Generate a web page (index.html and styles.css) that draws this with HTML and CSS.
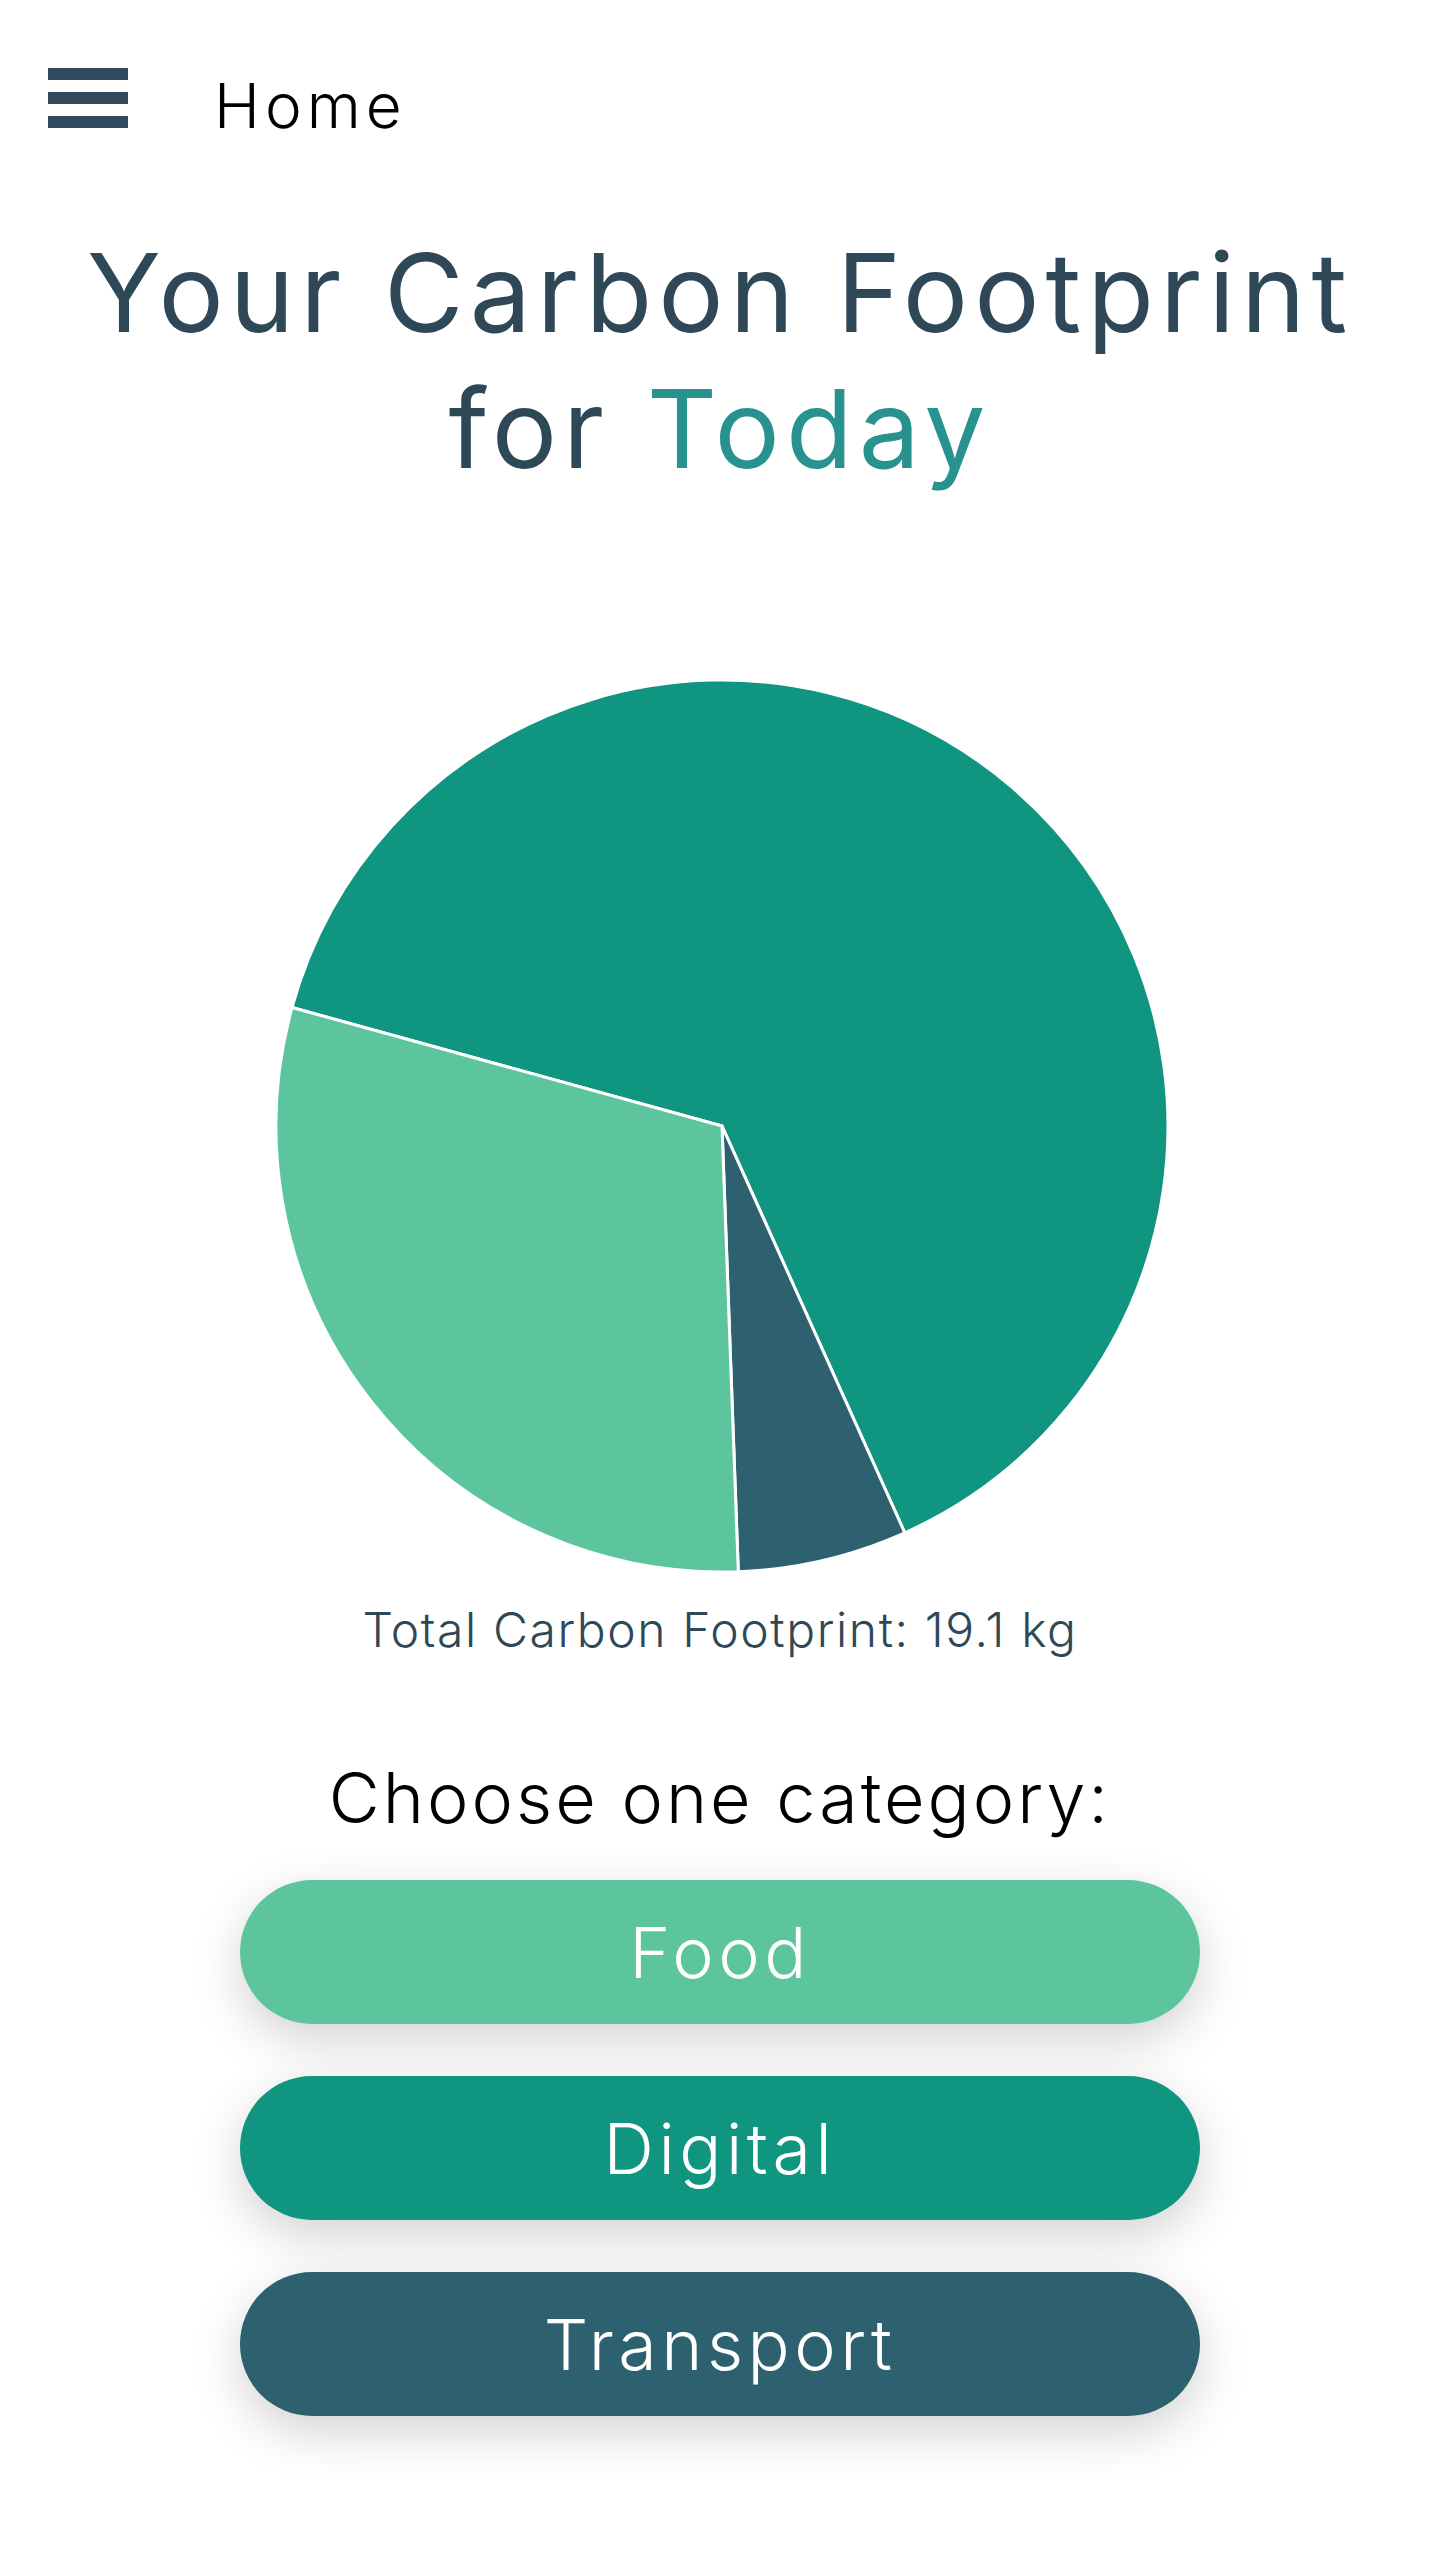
FILE: index.html
```html
<!DOCTYPE html>
<html lang="en">
<head>
<meta charset="utf-8">
<title>Home</title>
<link rel="stylesheet" href="styles.css">
</head>
<body>
<header class="topbar">
  <button class="menu" aria-label="Menu">
    <span class="bar"></span><span class="bar"></span><span class="bar"></span>
  </button>
  <span class="page-title">Home</span>
</header>
<main class="content">
  <h1 class="headline">Your Carbon Footprint<br>for <span class="accent">Today</span></h1>
  <svg class="pie" width="916" height="904" viewBox="0 0 916 904" aria-label="Carbon footprint by category">
    <path class="slice digital" d="M466 452 L36 333.5 A446 446 0 1 1 648.8 858.8 Z"/>
    <path class="slice transport" d="M466 452 L648.8 858.8 A446 446 0 0 1 482.3 897.7 Z"/>
    <path class="slice food" d="M466 452 L482.3 897.7 A446 446 0 0 1 36 333.5 Z"/>
  </svg>
  <p class="total">Total Carbon Footprint: 19.1 kg</p>
  <h2 class="choose">Choose one category:</h2>
  <div class="categories">
    <button class="cat cat-food">Food</button>
    <button class="cat cat-digital">Digital</button>
    <button class="cat cat-transport">Transport</button>
  </div>
</main>
</body>
</html>
```

FILE: styles.css
```css
html, body {
  margin: 0;
  padding: 0;
  background: #ffffff;
}
body {
  font-family: Inter, "Noto Sans", sans-serif;
  color: #2f4858;
  min-height: 2560px;
}
.topbar {
  height: 196px;
  display: flex;
  align-items: center;
  padding-left: 48px;
  gap: 86px;
}
.menu {
  width: 80px;
  height: 60px;
  padding: 0;
  border: none;
  background: transparent;
  display: flex;
  flex-direction: column;
  justify-content: space-between;
}
.bar {
  display: block;
  width: 80px;
  height: 12px;
  background: #31495a;
}
.page-title {
  font-size: 62px;
  font-weight: 300;
  letter-spacing: 5px;
  color: #000;
  margin-top: 14px;
}
.content {
  display: flex;
  flex-direction: column;
  align-items: center;
  padding-bottom: 120px;
}
.headline {
  margin: 28px 0 0;
  font-size: 109px;
  line-height: 136px;
  font-weight: 400;
  letter-spacing: 6px;
  text-align: center;
  color: #2f4858;
}
.accent {
  color: #28928f;
}
.pie {
  display: block;
  margin-top: 178px;
  margin-left: -12px;
}
.slice {
  stroke: #ffffff;
  stroke-width: 3;
  stroke-linejoin: round;
}
.digital { fill: #109580; }
.transport { fill: #2d6170; }
.food { fill: #5dc59d; }
.total {
  margin: 22px 0 0;
  font-size: 48px;
  line-height: 60px;
  font-weight: 300;
  letter-spacing: 1.6px;
  color: #2f4858;
}
.choose {
  margin: 96px 0 0;
  font-size: 70px;
  line-height: 84px;
  font-weight: 300;
  letter-spacing: 3px;
  color: #000;
}
.categories {
  margin-top: 40px;
  display: flex;
  flex-direction: column;
  gap: 52px;
}
.cat {
  width: 960px;
  height: 144px;
  border: none;
  border-radius: 72px;
  font-family: Inter, "Noto Sans", sans-serif;
  font-size: 70px;
  font-weight: 300;
  letter-spacing: 4.5px;
  color: #ffffff;
  box-shadow: 0 16px 50px rgba(0, 0, 0, 0.18);
  display: flex;
  align-items: center;
  justify-content: center;
}
.cat-food { background: #5dc59d; }
.cat-digital { background: #109580; }
.cat-transport { background: #2d6170; }
```
